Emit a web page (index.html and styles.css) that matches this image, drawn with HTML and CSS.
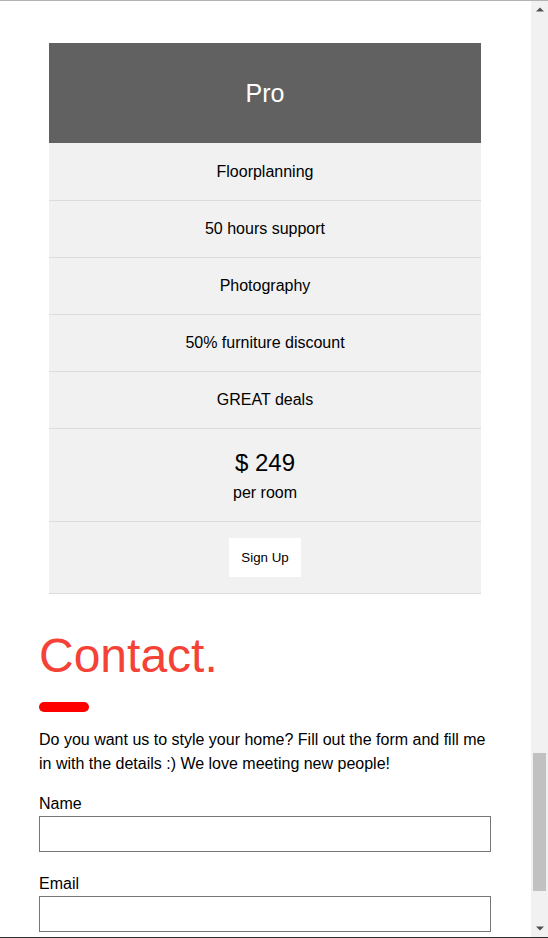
FILE: index.html
```html
<!DOCTYPE html>
<html lang="en">
<head>
<meta charset="utf-8">
<title>Pricing and Contact</title>
<link rel="stylesheet" href="styles.css">
</head>
<body>
<div class="frame">
  <main class="page">
    <div class="column">
      <ul class="price">
        <li class="header">Pro</li>
        <li class="item">Floorplanning</li>
        <li class="item">50 hours support</li>
        <li class="item">Photography</li>
        <li class="item">50% furniture discount</li>
        <li class="item">GREAT deals</li>
        <li class="amount">
          <div class="value">$ 249</div>
          <div class="unit">per room</div>
        </li>
        <li class="action"><button class="signup" type="button">Sign Up</button></li>
      </ul>
    </div>

    <section class="contact">
      <h1 class="title">Contact.</h1>
      <div class="bar"></div>
      <p class="intro">Do you want us to style your home? Fill out the form and fill me in with the details :) We love meeting new people!</p>
      <form class="form">
        <label class="label" for="name">Name</label>
        <input class="field" id="name" type="text">
        <label class="label" for="email">Email</label>
        <input class="field" id="email" type="text">
      </form>
    </section>
  </main>

  <div class="scrollbar">
    <div class="sb-btn">
      <svg width="8" height="5" viewBox="0 0 8 5"><polygon points="0,4.5 4,0.5 8,4.5" fill="#505050"/></svg>
    </div>
    <div class="sb-track"><div class="sb-thumb"></div></div>
    <div class="sb-btn">
      <svg width="8" height="5" viewBox="0 0 8 5"><polygon points="0,0.5 8,0.5 4,4.5" fill="#505050"/></svg>
    </div>
  </div>
</div>
</body>
</html>
```

FILE: styles.css
```css
* { box-sizing: border-box; }

html, body {
  margin: 0;
  padding: 0;
  background: #fff;
}

body {
  font-family: "Liberation Sans", Arial, sans-serif;
  color: #000;
}

.frame {
  display: flex;
  height: 938px;
  border-top: 1px solid #b3b3b3;
  border-bottom: 1px solid #2e2e2e;
  overflow: hidden;
}

.page {
  flex: 1;
  min-width: 0;
  overflow: hidden;
  padding: 0 40px 0 39px;
}

.column {
  padding: 42px 10px 0;
}

.price {
  list-style: none;
  margin: 0;
  padding: 0;
  text-align: center;
}

.header {
  height: 100px;
  background: #616161;
  color: #fff;
  font-size: 25px;
  display: flex;
  align-items: center;
  justify-content: center;
}

.item,
.amount,
.action {
  background: #f1f1f1;
  border-bottom: 1px solid #dcdcdc;
}

.item {
  font-size: 16px;
  line-height: 18px;
  padding: 19px 0;
}

.header + .item {
  padding-top: 20px;
}

.amount {
  padding: 20px 0 16px;
}

.value {
  font-size: 24px;
  line-height: 28px;
  margin-bottom: 4px;
}

.unit {
  font-size: 16px;
  line-height: 24px;
}

.action {
  padding: 16px 0;
}

.signup {
  font-family: "Liberation Sans", Arial, sans-serif;
  font-size: 13.333px;
  line-height: 15px;
  color: #000;
  background: #fff;
  border: 0;
  padding: 12px;
  margin: 0;
  cursor: pointer;
}

.contact {
  padding-top: 34px;
}

.title {
  margin: 0;
  font-size: 48px;
  line-height: 55px;
  font-weight: normal;
  color: #f44336;
}

.bar {
  width: 50px;
  height: 10px;
  margin-top: 19px;
  background: #ff0000;
  border-radius: 5px;
}

.intro {
  margin: 16px 0 19px;
  font-size: 16px;
  line-height: 24px;
}

.form {
  display: flex;
  flex-direction: column;
}

.label {
  font-size: 16px;
  line-height: 18px;
  margin-bottom: 3px;
}

.field {
  width: 100%;
  height: 36px;
  margin: 0 0 23px;
  border: 1px solid #767676;
  background: #fff;
  font-family: "Liberation Sans", Arial, sans-serif;
  font-size: 16px;
}

.scrollbar {
  width: 17px;
  flex: 0 0 17px;
  background: #f1f1f1;
  display: flex;
  flex-direction: column;
}

.sb-btn {
  height: 17px;
  display: flex;
  align-items: center;
  justify-content: center;
}

.sb-track {
  flex: 1;
  padding: 0 2px;
}

.sb-thumb {
  margin-top: 735px;
  height: 138px;
  background: #c1c1c1;
}
```
